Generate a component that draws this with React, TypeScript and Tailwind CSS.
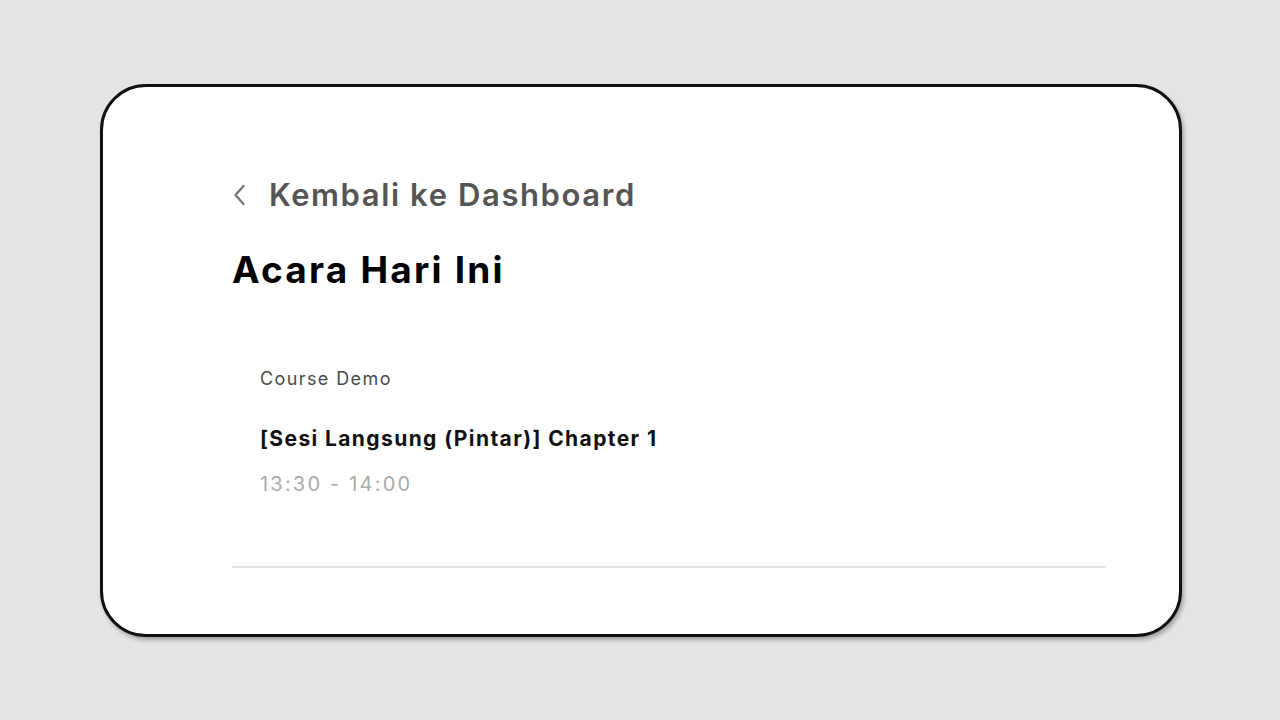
import React from "react";

const App = () => {
  return (
    <div className="w-[1280px] h-[720px] bg-[#e5e5e5] pt-[84px] pl-[100px]" style={{ fontFamily: "Inter, 'Noto Sans', sans-serif" }}>
      <div className="w-[1082px] h-[553px] bg-white border-[3px] border-[#111] rounded-[46px] shadow-[2px_3px_4px_rgba(0,0,0,0.3)] pl-[129px] pt-[92px]">
        <div className="w-[874px]">
          {/* Back link */}
          <a href="#" className="flex items-center gap-[21px] text-[#555555]">
            <svg width="16" height="26" viewBox="0 0 16 26" fill="none" stroke="#777" strokeWidth="2.4" strokeLinecap="round" strokeLinejoin="round">
              <path d="M11.5 4 L3.5 13 L11.5 22" />
            </svg>
            <span className="text-[31px] font-semibold leading-none tracking-[1.6px]">Kembali ke Dashboard</span>
          </a>

          <h1 className="mt-[41px] text-[37px] font-bold text-black leading-none tracking-[2.2px]">Acara Hari Ini</h1>

          {/* Event */}
          <div className="mt-[82px] pl-[28px]">
            <div className="text-[18px] text-[#4a4a4a] leading-none tracking-[1.4px]">Course Demo</div>
            <div className="mt-[40px] text-[21px] font-bold text-[#111] leading-none tracking-[1.4px]">[Sesi Langsung (Pintar)] Chapter 1</div>
            <div className="mt-[25px] text-[20px] text-[#aaaaaa] leading-none tracking-[2.2px]">13:30 - 14:00</div>
          </div>

          <div className="mt-[72px] h-[2px] bg-[#e3e3e3]" />
        </div>
      </div>
    </div>
  );
};

export default App;
